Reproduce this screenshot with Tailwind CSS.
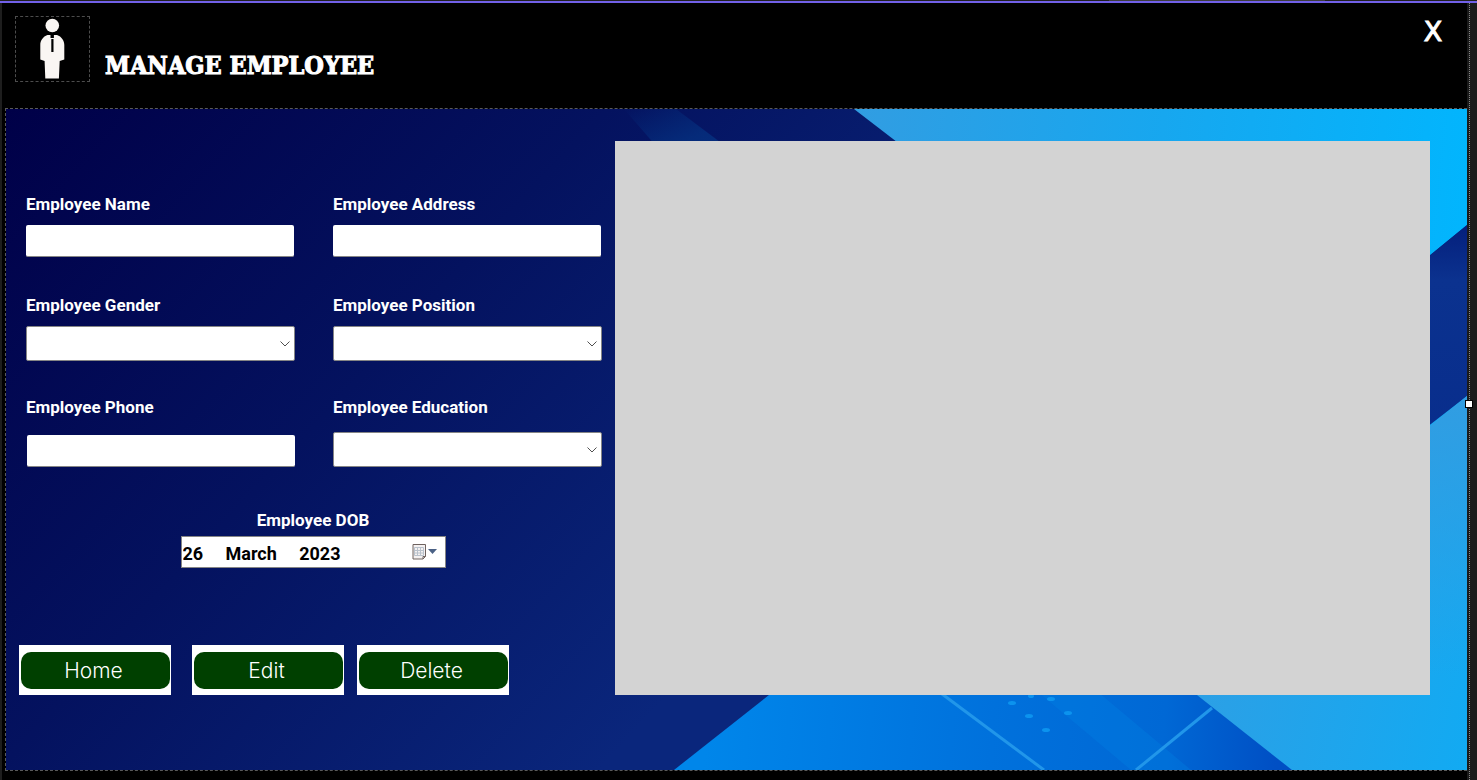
<!DOCTYPE html>
<html lang="en">
<head>
<meta charset="utf-8">
<meta name="viewport" content="width=device-width, initial-scale=1">
<title>Manage Employee</title>
<script src="https://cdn.jsdelivr.net/npm/@tailwindcss/browser@4"></script>
</head>
<body class="flex min-h-screen flex-col bg-black">
  <div class="flex h-px justify-end bg-[#1f1f1f] pr-38"><div class="h-px w-54 bg-[#3d3d3d]"></div></div>
  <div class="h-0.5 bg-[#7160e8]"></div>
  <div class="flex grow border-l-2 border-[#1e1e1e]">
    <div class="flex grow flex-col pb-[9px] pl-[3px]">
      <header class="flex h-[105px] items-start justify-between pl-[10px] pr-[18px] pt-[13px]">
        <div class="flex items-end gap-[15px]">
          <div class="flex h-[66px] w-[75px] justify-center border border-dashed border-[#4d4d4d]">
            <svg class="h-[64px] w-[73px]" viewBox="0 0 73 64" fill="#faf6f3" role="img" aria-label="Employee">
              <circle cx="36.300" cy="8.500" r="6.800"/>
              <path d="M31.500 18H41c4.500 1.500 7.300 5.500 7.300 10v14.500l-4.600 1.500-.8 17.500H29.300L28.600 44l-4.300-1.500V28c0-4.500 2.700-8.500 7.200-10z"/>
              <path d="M34.500 17.500h3.400V21h-3.400zM35.300 22h2.200v13h-2.200z" fill="#000"/>
            </svg>
          </div>
          <h1 class="font-['DejaVu_Serif_Condensed','DejaVu_Serif',serif] text-[25px] leading-8 font-bold text-white [-webkit-text-stroke:1px_white]">MANAGE EMPLOYEE</h1>
        </div>
        <button type="button" aria-label="Close" class="h-8 w-8 font-['DejaVu_Sans',sans-serif] text-[27px] leading-7 text-white [-webkit-text-stroke:1px_white]">X</button>
      </header>

      <main class="relative isolate flex grow border border-r-0 border-dashed border-[#5a5a5a]">
        <svg class="absolute inset-0 -z-10 h-full w-full" viewBox="0 0 1461 661" preserveAspectRatio="none" aria-hidden="true">
          <defs>
            <linearGradient id="navy" gradientUnits="userSpaceOnUse" x1="0" y1="0" x2="650" y2="600">
              <stop offset="0" stop-color="#000048"/><stop offset=".5" stop-color="#04125f"/><stop offset="1" stop-color="#0a267c"/>
            </linearGradient>
            <linearGradient id="sky" gradientUnits="userSpaceOnUse" x1="850" y1="0" x2="1461" y2="60">
              <stop offset="0" stop-color="#319de2"/><stop offset=".5" stop-color="#17a7ef"/><stop offset="1" stop-color="#02b5fd"/>
            </linearGradient>
            <linearGradient id="azure" gradientUnits="userSpaceOnUse" x1="700" y1="620" x2="1270" y2="661">
              <stop offset="0" stop-color="#0086ea"/><stop offset=".5" stop-color="#0071dc"/><stop offset=".8" stop-color="#0068d5"/><stop offset="1" stop-color="#004fc4"/>
            </linearGradient>
            <linearGradient id="lower" gradientUnits="userSpaceOnUse" x1="1200" y1="590" x2="1461" y2="650">
              <stop offset="0" stop-color="#2ba0e6"/><stop offset="1" stop-color="#12aaf2"/>
            </linearGradient>
            <linearGradient id="edge" x1="0" y1="0" x2="0" y2="1">
              <stop offset="0" stop-color="#319de2"/><stop offset="1" stop-color="#319de2" stop-opacity="0"/>
            </linearGradient>
            <linearGradient id="band" x1="0" y1="0" x2="0" y2="1">
              <stop offset="0" stop-color="#041f7c"/><stop offset=".25" stop-color="#0b328f"/><stop offset="1" stop-color="#082d8c"/>
            </linearGradient>
            <linearGradient id="streak" x1="0" y1="0" x2="1" y2="1">
              <stop offset="0" stop-color="#05307f" stop-opacity="0"/><stop offset=".5" stop-color="#05307f" stop-opacity=".8"/><stop offset="1" stop-color="#053080"/>
            </linearGradient>
          </defs>
          <path fill="url(#navy)" d="M0 0h1461v661H0z"/>
          <path fill="url(#streak)" d="M618 0h52l80 60h-80z"/>
          <path fill="url(#sky)" d="M848 0h613v116l-98 80H1103z"/>
          <path fill="url(#band)" d="M1461 116v172l-61 50v-172z"/>
          <path fill="url(#azure)" d="M668 661L806 552h424l75 109z"/>
          <path fill="#0083e4" fill-opacity=".3" d="M995 552h60l130 109h-60z"/>
          <path fill="url(#lower)" d="M1461 287v374H1286L1134 541z"/>
          <path fill="url(#edge)" d="M1461 287v280h-61V337z"/>
          <g stroke="#2196ea" stroke-width="3"><path d="M932 582l106 79"/><path d="M1206 599l-76 62"/></g>
          <g fill="#0c93ee">
            <ellipse cx="1006" cy="594" rx="4" ry="2"/><ellipse cx="1023" cy="607" rx="4" ry="2"/><ellipse cx="1040" cy="621" rx="4" ry="2"/>
            <ellipse cx="1045" cy="590" rx="4" ry="2"/><ellipse cx="1062" cy="604" rx="4" ry="2"/><ellipse cx="1025" cy="587" rx="3" ry="2"/>
          </g>
        </svg>

        <form class="flex shrink-0 flex-col pl-[13px] pr-2 pt-[83px] font-[Roboto,sans-serif] text-[17px] leading-6 font-bold text-white">
          <div class="grid grid-cols-[269px_269px] gap-x-[38px] pl-[7px] pr-[5px]">
            <div class="flex h-[101px] flex-col items-start gap-[9px]">
              <label for="name">Employee Name</label>
              <input id="name" type="text" class="h-8 w-[268px] rounded-xs border-b border-[#858585] bg-white px-1 text-black">
            </div>
            <div class="flex h-[101px] flex-col items-start gap-[9px]">
              <label for="address">Employee Address</label>
              <input id="address" type="text" class="h-8 w-[268px] rounded-xs border-b border-[#858585] bg-white px-1 text-black">
            </div>
            <div class="flex h-[102px] flex-col gap-[9px]">
              <label for="gender">Employee Gender</label>
              <div class="grid">
                <select id="gender" class="col-start-1 row-start-1 h-[35px] w-full appearance-none rounded-xs border border-[#858585] bg-white px-1 text-black"><option></option><option>Male</option><option>Female</option></select>
                <svg class="pointer-events-none col-start-1 row-start-1 mr-[5px] h-[6px] w-[10px] self-center justify-self-end" viewBox="0 0 10 6" fill="none" stroke="#505050" aria-hidden="true"><path d="M.500.500L5 5 9.500.500"/></svg>
              </div>
            </div>
            <div class="flex h-[102px] flex-col gap-[9px]">
              <label for="position">Employee Position</label>
              <div class="grid">
                <select id="position" class="col-start-1 row-start-1 h-[35px] w-full appearance-none rounded-xs border border-[#858585] bg-white px-1 text-black"><option></option><option>Manager</option></select>
                <svg class="pointer-events-none col-start-1 row-start-1 mr-[5px] h-[6px] w-[10px] self-center justify-self-end" viewBox="0 0 10 6" fill="none" stroke="#505050" aria-hidden="true"><path d="M.500.500L5 5 9.500.500"/></svg>
              </div>
            </div>
            <div class="flex h-[72px] flex-col items-end justify-between">
              <label for="phone" class="self-start">Employee Phone</label>
              <input id="phone" type="text" class="h-8 w-[268px] rounded-xs border-b border-[#858585] bg-white px-1 text-black">
            </div>
            <div class="flex h-[72px] flex-col justify-between">
              <label for="education">Employee Education</label>
              <div class="grid">
                <select id="education" class="col-start-1 row-start-1 h-[35px] w-full appearance-none rounded-xs border border-[#858585] bg-white px-1 text-black"><option></option><option>Graduate</option></select>
                <svg class="pointer-events-none col-start-1 row-start-1 mr-[5px] h-[6px] w-[10px] self-center justify-self-end" viewBox="0 0 10 6" fill="none" stroke="#505050" aria-hidden="true"><path d="M.500.500L5 5 9.500.500"/></svg>
              </div>
            </div>
          </div>

          <div class="mt-[41px] flex w-[265px] flex-col items-center gap-1 self-center">
            <label for="dob">Employee DOB</label>
            <div class="flex h-8 w-full items-center border border-[#858585] bg-white pr-1.5">
              <input id="dob" type="text" value="26&nbsp;&nbsp;&nbsp;&nbsp;&nbsp;March&nbsp;&nbsp;&nbsp;&nbsp;&nbsp;2023" class="h-[30px] min-w-0 grow bg-white pl-px pt-0.5 text-lg text-black">
              <button type="button" aria-label="Open calendar" class="flex items-center">
                <svg class="h-4 w-[27px]" viewBox="0 0 27 16" fill="none">
                  <path d="M1 .500h12.500v12l-2.500 2.500H1z" fill="#f4f1f1" stroke="#6e625f"/>
                  <path d="M2.500 3.500h9v8h-9zM2.500 6.500h9M2.500 9h9M5.500 3.500v8M8.500 3.500v8" stroke="#b9c2cc"/>
                  <path d="M11 15v-2.500h2.500" stroke="#6e625f"/>
                  <path d="M16 5h9l-4.500 5z" fill="#4a6185"/>
                </svg>
              </button>
            </div>
          </div>

          <div class="mt-[77px] flex font-[Inter,sans-serif] text-[21px] font-light">
            <button type="button" class="mr-[21px] flex h-[50px] w-[152px] bg-white pl-0.5 pr-px pt-[7px]"><span class="h-[37px] grow rounded-[10px] bg-[#004000] pr-1 leading-[38px]">Home</span></button>
            <button type="button" class="mr-[13px] flex h-[50px] w-[152px] bg-white pl-0.5 pr-px pt-[7px]"><span class="h-[37px] grow rounded-[10px] bg-[#004000] pr-1 leading-[38px]">Edit</span></button>
            <button type="button" class="flex h-[50px] w-[152px] bg-white pl-0.5 pr-px pt-[7px]"><span class="h-[37px] grow rounded-[10px] bg-[#004000] pr-1 leading-[38px]">Delete</span></button>
          </div>
        </form>

        <section aria-label="Employee list" class="mt-8 mr-[37px] mb-[75px] grow bg-[#d3d3d3]"></section>
      </main>
    </div>

    <aside class="relative w-[10px] bg-[#1b1b1b] pl-0.5">
      <div class="h-full w-0 border-l border-dotted border-[#8a8a8a]"></div>
      <div class="absolute top-[397px] -left-0.5 h-2 w-2 border border-black bg-white"></div>
    </aside>
  </div>
</body>
</html>
